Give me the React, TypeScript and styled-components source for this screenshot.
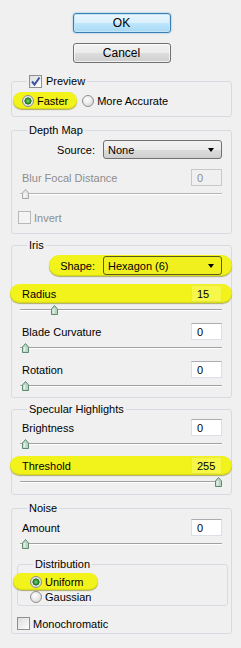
import styled, { createGlobalStyle, css } from "styled-components";

const GlobalStyle = createGlobalStyle`
  html, body {
    margin: 0;
    padding: 0;
    background: #f0f0f0;
  }
  body {
    font-family: "Liberation Sans", Arial, sans-serif;
    font-size: 11px;
    color: #000;
  }
`;

const Dialog = styled.div`
  width: 241px;
  height: 648px;
  box-sizing: border-box;
  padding: 13px 9px 0 11px;
  display: flex;
  flex-direction: column;
`;

const Buttons = styled.div`
  display: flex;
  flex-direction: column;
  align-items: center;
  gap: 10px;
`;

const Button = styled.button<{ $primary?: boolean }>`
  width: 98px;
  height: 20px;
  padding: 0;
  font: 12px "Liberation Sans", Arial, sans-serif;
  color: #000;
  border-radius: 3px;
  border: 1px solid #707070;
  background: linear-gradient(#f2f2f2 0%, #ebebeb 50%, #dddddd 51%, #cfcfcf 100%);
  box-shadow: inset 0 0 0 1px rgba(255, 255, 255, 0.7);
  ${(p) =>
    p.$primary &&
    css`
      border-color: #3c7fb1;
      background: linear-gradient(#eaf6fd 0%, #d9f0fc 50%, #bee6fd 51%, #a7d9f5 100%);
      box-shadow: inset 0 0 0 1px #c4e5f6, 0 0 2px #68b3db;
    `}
`;

const Group = styled.fieldset<{ $top: number; $pad: string }>`
  margin: ${(p) => p.$top}px 0 0;
  padding: ${(p) => p.$pad};
  border: 1px solid #d5dbe0;
  border-radius: 3px;
  min-width: 0;
`;

const SubGroup = styled(Group)`
  margin-left: -5px;
  margin-right: -6px;
`;

const Legend = styled.legend<{ $indent?: number }>`
  margin-left: ${(p) => p.$indent ?? 5}px;
  padding: 0 2px;
  height: 13px;
  line-height: 13px;
  display: flex;
  align-items: center;
  gap: 4px;
`;

const Row = styled.div<{ $top?: number; $h?: number; $shift?: number }>`
  display: flex;
  align-items: center;
  height: ${(p) => p.$h ?? 17}px;
  margin-top: ${(p) => p.$top ?? 0}px;
  margin-left: ${(p) => p.$shift ?? 0}px;
`;

const FieldRow = styled(Row)`
  justify-content: space-between;
`;

const SelectRow = styled(Row)`
  justify-content: flex-end;
  gap: 8px;
`;

const Mark = styled.div<{ $left: number; $right: number; $grow?: boolean }>`
  display: flex;
  align-items: center;
  justify-content: space-between;
  gap: 8px;
  align-self: stretch;
  flex: ${(p) => (p.$grow ? 1 : "none")};
  margin: -1px ${(p) => -p.$right}px -1px ${(p) => -p.$left}px;
  padding: 1px ${(p) => p.$right}px 1px ${(p) => p.$left}px;
  background: #f3f31c;
  border-radius: 10px;
  box-shadow: 0 1px 1px rgba(120, 120, 0, 0.55), inset 0 -1px 1px rgba(170, 170, 0, 0.35);
`;

const Label = styled.span<{ $disabled?: boolean }>`
  color: ${(p) => (p.$disabled ? "#8d8d8d" : "#000")};
  white-space: nowrap;
`;

const NumberBox = styled.div<{ $marked?: boolean; $disabled?: boolean }>`
  width: 31px;
  height: 17px;
  box-sizing: border-box;
  padding-left: 5px;
  display: flex;
  align-items: center;
  background: #fff;
  border: 1px solid #dbdfe6;
  border-top-color: #abadb3;
  ${(p) =>
    p.$marked &&
    css`
      background: rgba(255, 255, 160, 0.35);
      border-color: rgba(160, 160, 0, 0.15);
    `}
  ${(p) =>
    p.$disabled &&
    css`
      background: transparent;
      border-color: #c9c9c9;
      color: #8d8d8d;
    `}
`;

const SelectBox = styled.div<{ $marked?: boolean }>`
  width: 119px;
  height: 19px;
  box-sizing: border-box;
  padding: 0 7px 0 4px;
  display: flex;
  align-items: center;
  justify-content: space-between;
  border: 1px solid #707070;
  border-radius: 3px;
  background: linear-gradient(#f2f2f2 0%, #ebebeb 50%, #dddddd 51%, #cfcfcf 100%);
  ${(p) =>
    p.$marked &&
    css`
      border-color: #5a5a20;
      background: #f0f01e;
    `}
`;

const Arrow = styled.span`
  width: 0;
  height: 0;
  border-left: 3.5px solid transparent;
  border-right: 3.5px solid transparent;
  border-top: 4px solid #000;
`;

const Track = styled.div<{ $disabled?: boolean }>`
  position: relative;
  height: 13px;
  &::before {
    content: "";
    position: absolute;
    left: -2px;
    right: 0;
    top: 7px;
    height: 1px;
    border-radius: 1px;
    background: ${(p) => (p.$disabled ? "#b4b4b4" : "#a0a0a0")};
    box-shadow: 0 1px 0 #fff;
  }
`;

const Thumb = styled.svg`
  position: absolute;
  top: 3px;
  width: 7px;
  height: 10px;
`;

const Radio = styled.span<{ $on?: boolean }>`
  width: 12px;
  height: 12px;
  box-sizing: border-box;
  border-radius: 50%;
  border: 1px solid #8e8f8f;
  flex: none;
  background: radial-gradient(circle at 40% 35%, #ffffff 0%, #e6e6e6 55%, #cfcfcf 100%);
  ${(p) =>
    p.$on &&
    css`
      background: radial-gradient(circle, #7fd07f 0, #2f9a2f 2.2px, #1d5e1d 3.3px, #e9e9e9 3.8px, #d2d2d2 100%);
    `}
`;

const Check = styled.span<{ $disabled?: boolean }>`
  width: 13px;
  height: 13px;
  box-sizing: border-box;
  flex: none;
  border: 1px solid ${(p) => (p.$disabled ? "#b8b8b8" : "#8e8f8f")};
  background: ${(p) => (p.$disabled ? "#f4f4f4" : "linear-gradient(135deg, #dcdcdc, #ffffff)")};
  display: flex;
  align-items: center;
  justify-content: center;
`;

const Choice = styled.label`
  display: flex;
  align-items: center;
  gap: 3px;
`;

function Slider({ value, max, disabled }: { value: number; max: number; disabled?: boolean }) {
  const left = (value / max) * 193;
  return (
    <Track $disabled={disabled}>
      <Thumb viewBox="0 0 7 10" style={{ left }}>
        <polygon
          points="0.5,4 3.5,0.5 6.5,4 6.5,9.5 0.5,9.5"
          fill={disabled ? "#e8e8e8" : "#b9d6c2"}
          stroke={disabled ? "#a9a9a9" : "#5f8a70"}
          strokeWidth="1"
        />
        <rect x="1.5" y="4" width="2" height="4.5" fill="#fff" opacity="0.6" />
      </Thumb>
    </Track>
  );
}

function SliderField({
  label,
  value,
  max,
  top,
  marked,
  disabled,
}: {
  label: string;
  value: number;
  max: number;
  top: number;
  marked?: boolean;
  disabled?: boolean;
}) {
  const line = (
    <>
      <Label $disabled={disabled}>{label}</Label>
      <NumberBox $marked={marked} $disabled={disabled}>
        {value}
      </NumberBox>
    </>
  );
  return (
    <>
      <FieldRow $top={top}>
        {marked ? (
          <Mark $left={12} $right={10} $grow>
            {line}
          </Mark>
        ) : (
          line
        )}
      </FieldRow>
      <Slider value={value} max={max} disabled={disabled} />
    </>
  );
}

const Tick = () => (
  <svg width="11" height="11" viewBox="0 0 11 11">
    <path d="M2 5.5 L4.5 8.5 L9.5 1.5" fill="none" stroke="#3b53a0" strokeWidth="2" />
  </svg>
);

export default function App() {
  return (
    <>
      <GlobalStyle />
      <Dialog>
        <Buttons>
          <Button $primary>OK</Button>
          <Button>Cancel</Button>
        </Buttons>

        <Group $top={12} $pad="5px 9px 8px 10px">
          <Legend>
            <Check>
              <Tick />
            </Check>
            Preview
          </Legend>
          <Row $h={15}>
            <Mark $left={9} $right={9}>
              <Choice>
                <Radio $on />
                Faster
              </Choice>
            </Mark>
            <Choice style={{ marginLeft: 14 }}>
              <Radio />
              More Accurate
            </Choice>
          </Row>
        </Group>

        <Group $top={7} $pad="3px 9px 9px 10px">
          <Legend>Depth Map</Legend>
          <SelectRow $h={19}>
            <Label>Source:</Label>
            <SelectBox>
              None
              <Arrow />
            </SelectBox>
          </SelectRow>
          <SliderField label="Blur Focal Distance" value={0} max={100} top={10} disabled />
          <Row $h={13} $top={12} $shift={-4}>
            <Choice>
              <Check $disabled />
              <Label $disabled>Invert</Label>
            </Choice>
          </Row>
        </Group>

        <Group $top={5} $pad="4px 9px 6px 10px">
          <Legend>Iris</Legend>
          <SelectRow $h={19}>
            <Mark $left={11} $right={10}>
              <Label>Shape:</Label>
              <SelectBox $marked>
                Hexagon (6)
                <Arrow />
              </SelectBox>
            </Mark>
          </SelectRow>
          <SliderField label="Radius" value={15} max={100} top={10} marked />
          <SliderField label="Blade Curvature" value={0} max={100} top={8} />
          <SliderField label="Rotation" value={0} max={100} top={8} />
        </Group>

        <Group $top={5} $pad="3px 9px 7px 10px">
          <Legend>Specular Highlights</Legend>
          <SliderField label="Brightness" value={0} max={255} top={0} />
          <SliderField label="Threshold" value={255} max={255} top={8} marked />
        </Group>

        <Group $top={7} $pad="4px 9px 3px 10px">
          <Legend>Noise</Legend>
          <SliderField label="Amount" value={0} max={100} top={0} />
          <SubGroup $top={9} $pad="3px 6px 1px 12px">
            <Legend $indent={3}>Distribution</Legend>
            <Row $h={15}>
              <Mark $left={17} $right={14}>
                <Choice>
                  <Radio $on />
                  Uniform
                </Choice>
              </Mark>
            </Row>
            <Row $h={15}>
              <Choice>
                <Radio />
                Gaussian
              </Choice>
            </Row>
          </SubGroup>
          <Row $h={13} $top={11} $shift={-5}>
            <Choice>
              <Check />
              Monochromatic
            </Choice>
          </Row>
        </Group>
      </Dialog>
    </>
  );
}
